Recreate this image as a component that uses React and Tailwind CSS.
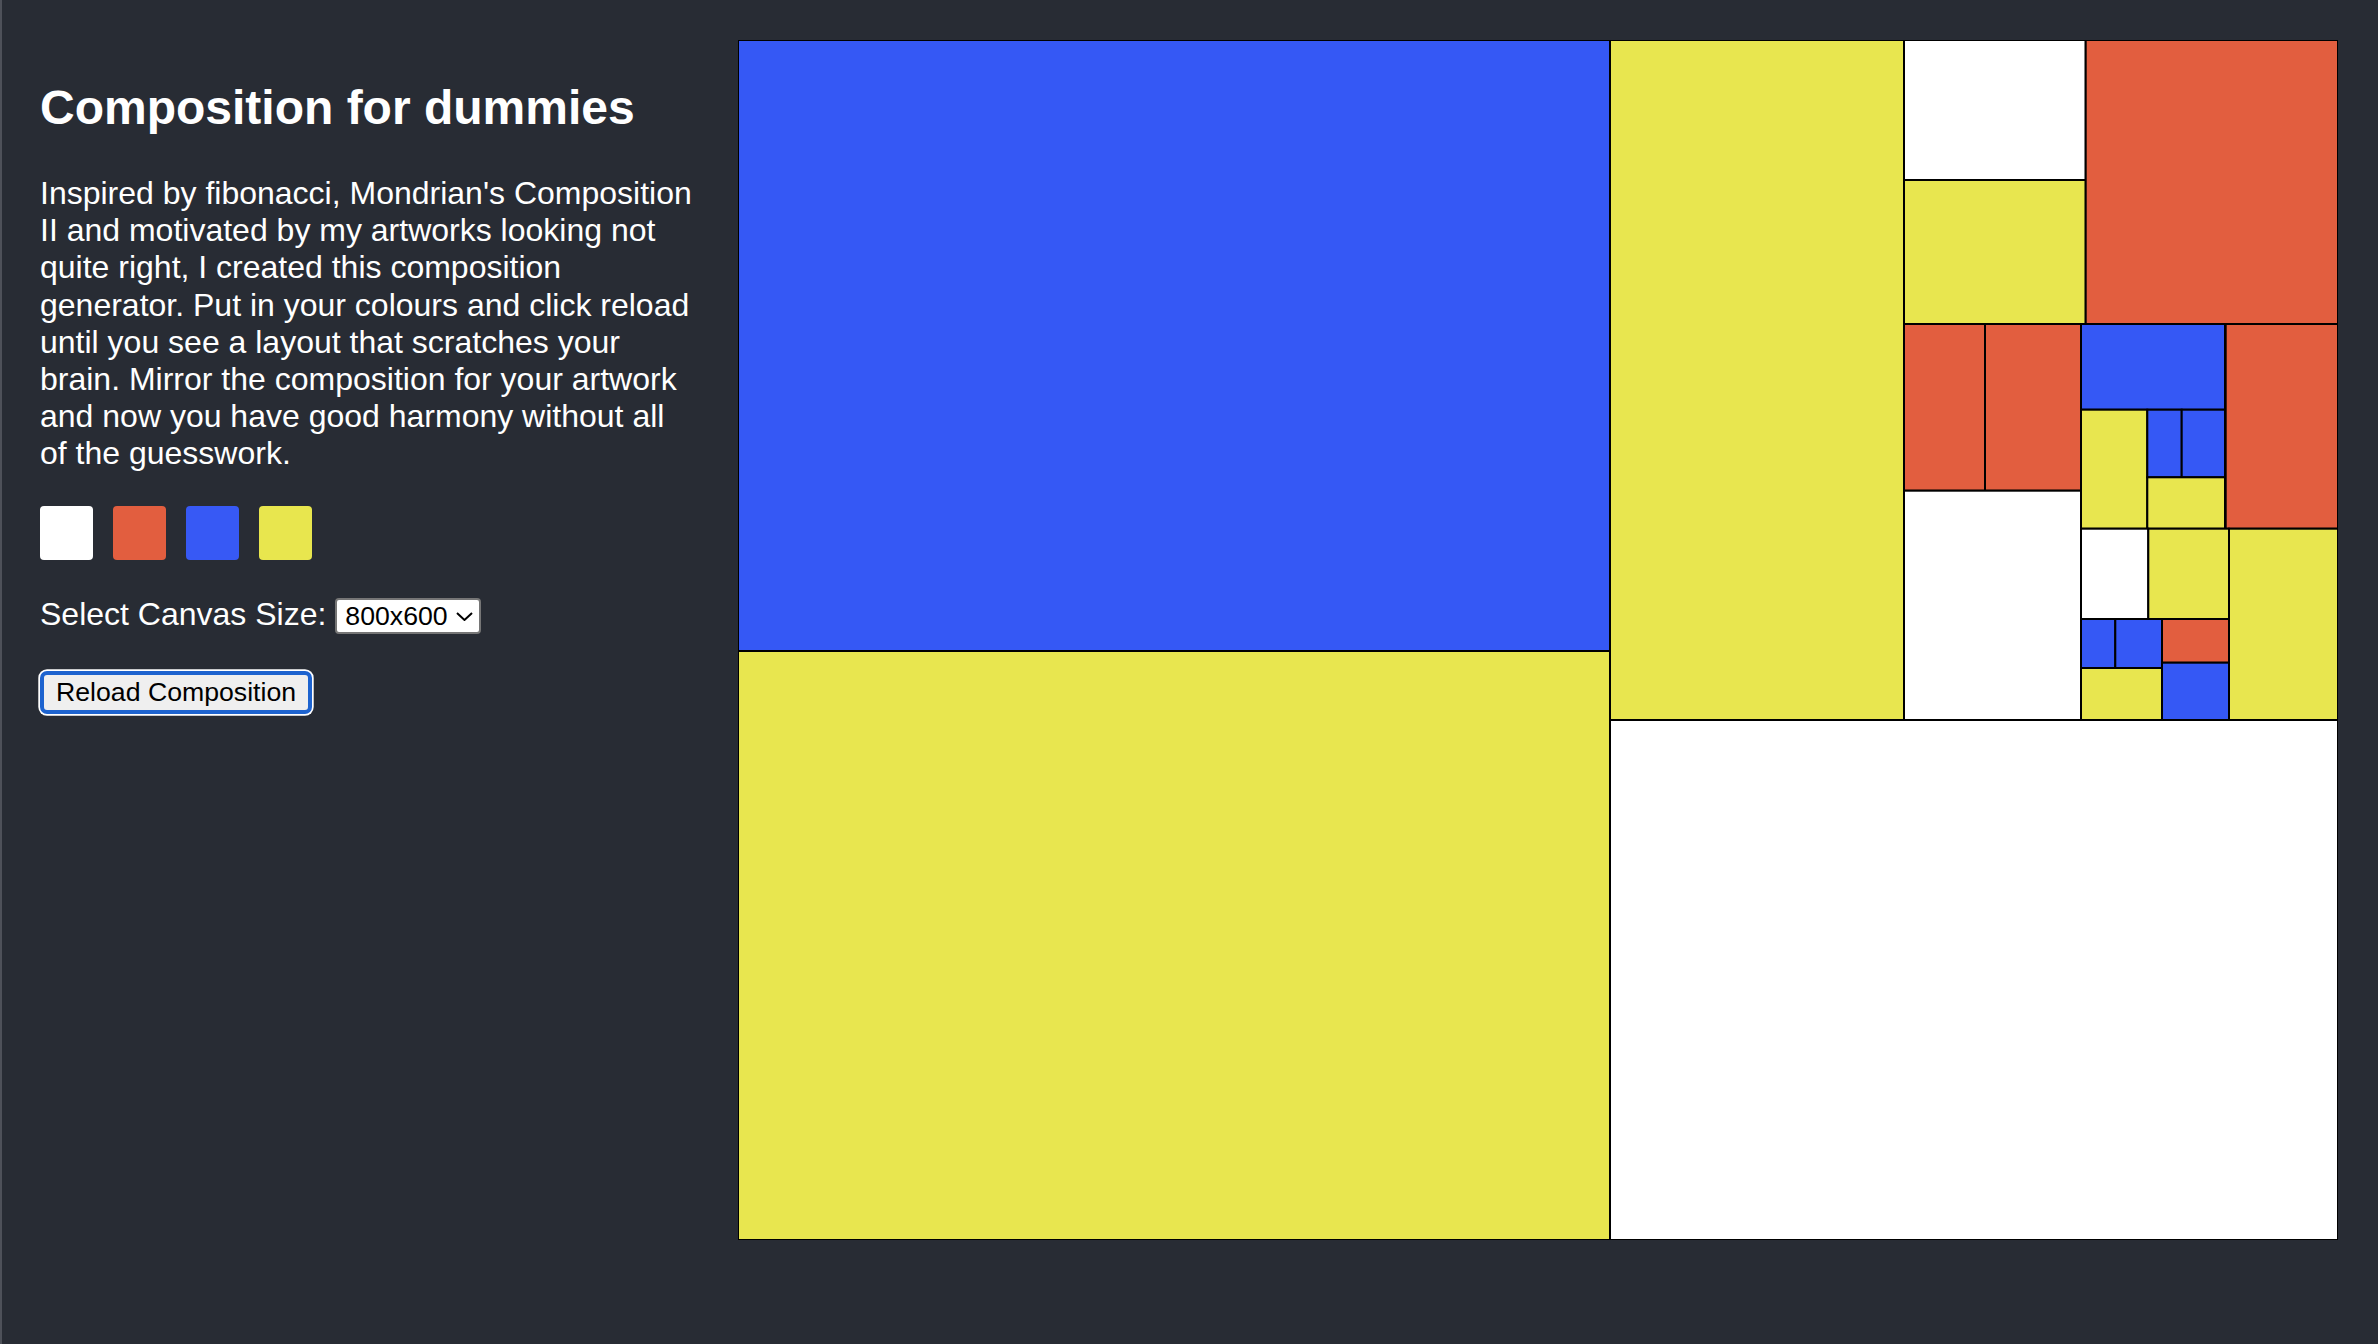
import React from "react";

const B = "#3558f5";
const R = "#e25e3f";
const Y = "#e8e64f";
const W = "#ffffff";

const rects = [
  [0, 0, 872, 611, B],
  [0, 611, 872, 589, Y],
  [872, 0, 294, 680, Y],
  [872, 680, 728, 520, W],
  [1166, 0, 181.7, 140, W],
  [1166, 140, 181.7, 144, Y],
  [1347.7, 0, 252.3, 284, R],
  [1166, 284, 81, 166.7, R],
  [1247, 284, 96, 166.7, R],
  [1166, 450.7, 177, 229.3, W],
  [1343, 284, 144, 85.7, B],
  [1487.7, 284, 112.3, 204.7, R],
  [1343, 369.7, 66.3, 119, Y],
  [1409.3, 369.7, 34.4, 67.6, B],
  [1443.7, 369.7, 43.3, 67.6, B],
  [1409.3, 437.3, 77.7, 51.4, Y],
  [1343, 488.7, 67.3, 90.3, W],
  [1410.3, 488.7, 80.7, 90.3, Y],
  [1491, 488.7, 109, 191.3, Y],
  [1343, 579, 34.3, 49, B],
  [1377.3, 579, 46.7, 49, B],
  [1424, 579, 67, 43.7, R],
  [1343, 628, 81, 52, Y],
  [1424, 622.7, 67, 57.3, B],
];

const font = { fontFamily: '"Liberation Sans", Arial, sans-serif' };

export default function App() {
  return (
    <div
      className="flex h-[1344px] w-[2378px] border-l-2 border-[#4e5159] bg-[#282c34] pt-[40px] text-white"
      style={font}
    >
      <div className="w-[736px] shrink-0 pl-[38px] pr-[42px]">
        <h2 className="mt-[40px] mb-[40px] text-[48px] font-bold leading-[55px]">
          Composition for dummies
        </h2>
        <p className="text-[32px] leading-[37.2px]">
          Inspired by fibonacci, Mondrian's Composition II and motivated by my
          artworks looking not quite right, I created this composition
          generator. Put in your colours and click reload until you see a
          layout that scratches your brain. Mirror the composition for your
          artwork and now you have good harmony without all of the guesswork.
        </p>
        <div className="mt-[33px] flex gap-[20px]">
          <div className="h-[54px] w-[53px] rounded-[4px] bg-white" />
          <div className="h-[54px] w-[53px] rounded-[4px] bg-[#e25e3f]" />
          <div className="h-[54px] w-[53px] rounded-[4px] bg-[#3759f5]" />
          <div className="h-[54px] w-[53px] rounded-[4px] bg-[#e8e64e]" />
        </div>
        <div className="mt-[36.5px] flex items-start">
          <span className="text-[32px] leading-[36.8px]">Select Canvas Size:</span>
          <div className="relative ml-[9px] mt-[2px]">
            <select
              className="block h-[36px] w-[146px] appearance-none rounded-[4px] border-2 border-[#767676] bg-white pl-[8px] text-[26.67px] leading-[30px] text-black"
              style={font}
              defaultValue="800x600"
            >
              <option>800x600</option>
              <option>1200x900</option>
              <option>1600x1200</option>
            </select>
            <svg
              className="pointer-events-none absolute left-[121px] top-[14px]"
              width="17"
              height="9"
              viewBox="0 0 17 9"
            >
              <path d="M1 1 L8.5 8 L16 1" fill="none" stroke="#000" strokeWidth="2" />
            </svg>
          </div>
        </div>
        <button
          className="mt-[37px] block h-[43px] rounded-[7px] border-4 border-[#1d63cf] bg-[#efefef] px-[12px] text-[26.67px] leading-[30.6px] text-black shadow-[0_0_0_1.7px_#ffffff]"
          style={font}
        >
          Reload Composition
        </button>
      </div>
      <div className="shrink-0">
        <svg width="1600" height="1200" viewBox="0 0 1600 1200" className="block overflow-hidden">
          {rects.map(([x, y, w, h, c], i) => (
            <rect key={i} x={x} y={y} width={w} height={h} fill={c} stroke="#000" strokeWidth="2" />
          ))}
        </svg>
      </div>
    </div>
  );
}
